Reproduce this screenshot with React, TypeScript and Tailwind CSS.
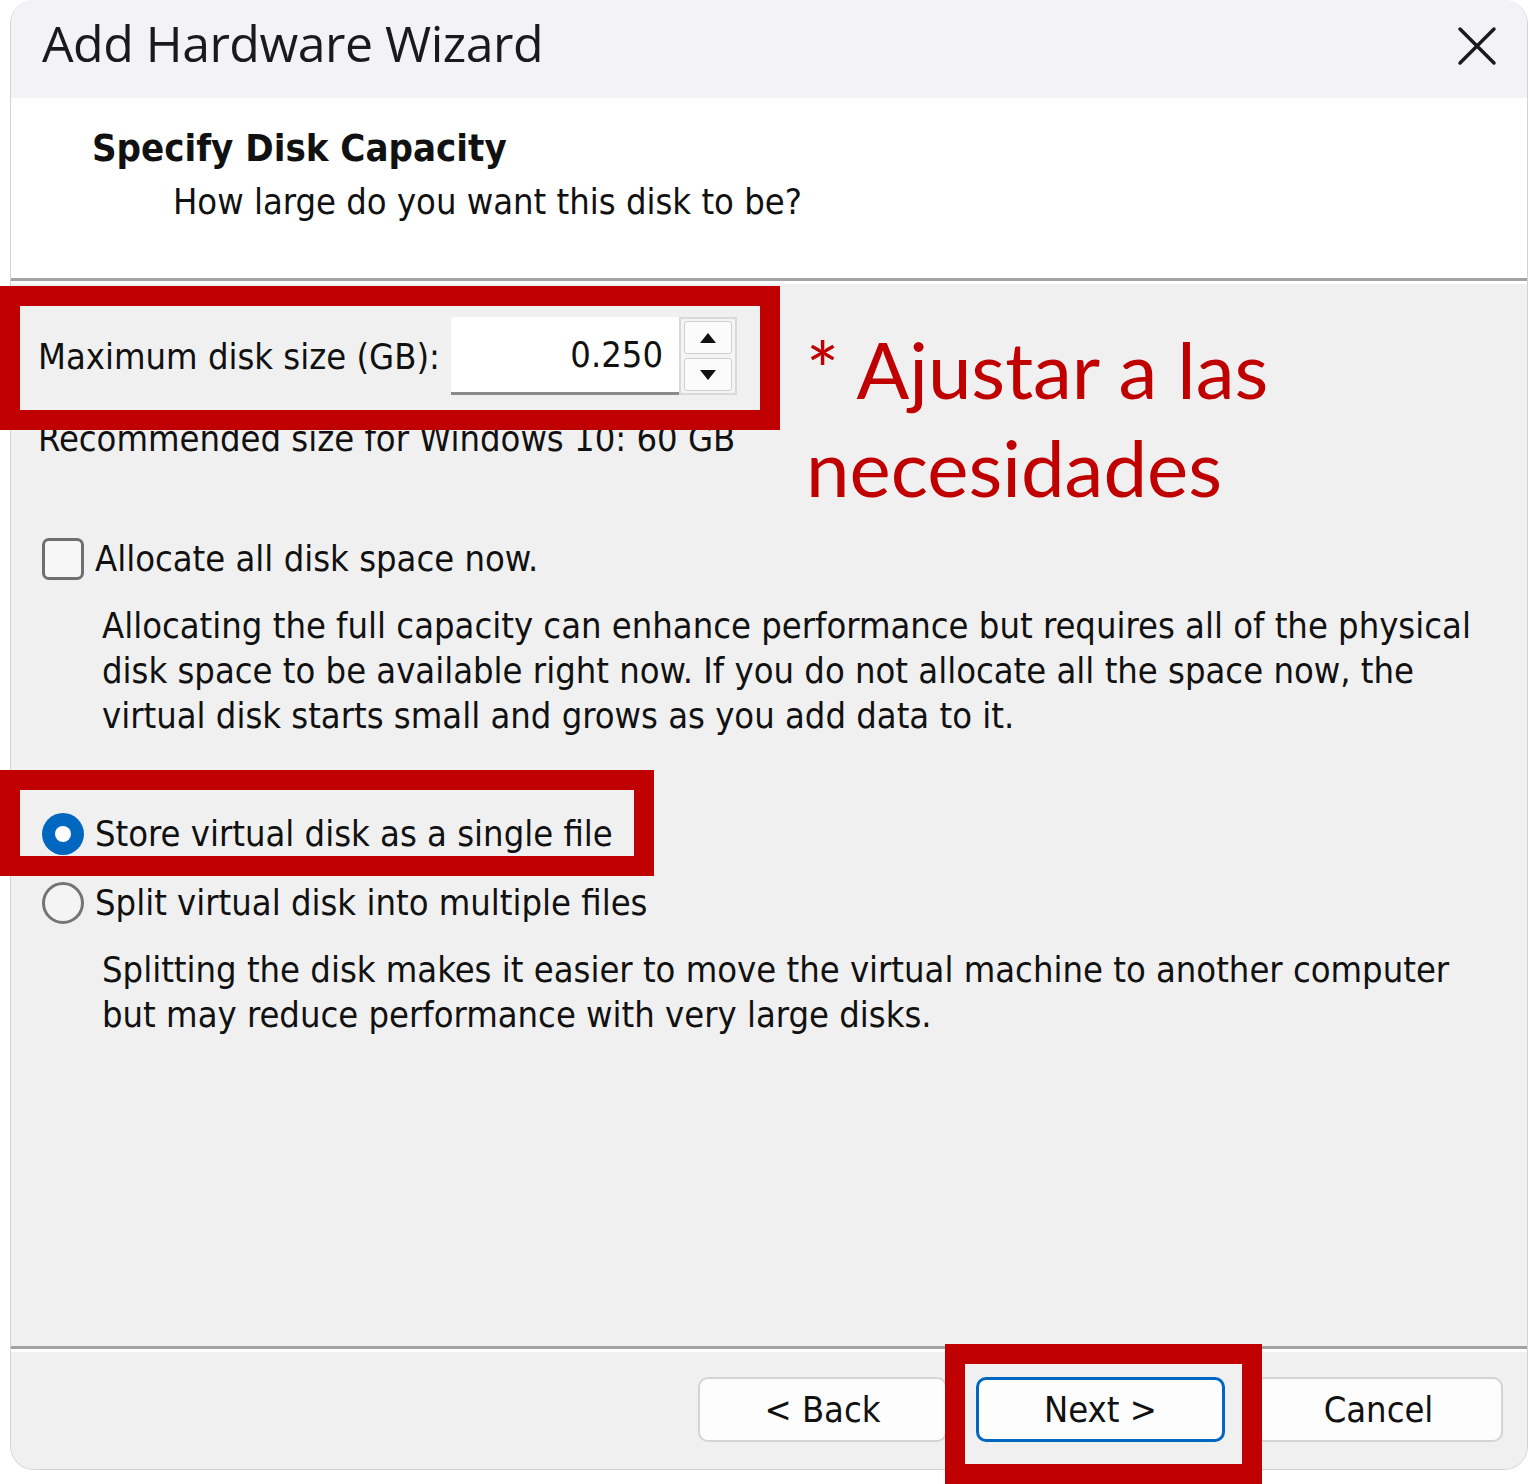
import React from "react";

const BODY = "font-['DejaVu_Sans_Condensed','DejaVu_Sans',sans-serif]";

function CloseIcon() {
  return (
    <svg width="40" height="40" viewBox="0 0 40 40" className="text-[#1b1b1b] mb-[6px]">
      <path d="M3 3 L37 37 M37 3 L3 37" stroke="currentColor" strokeWidth="3.5" strokeLinecap="round" />
    </svg>
  );
}

function Spinner() {
  return (
    <div className="flex flex-col gap-[4px] h-[78px] w-[58px] border-2 border-[#d9d9d9] bg-[#f4f4f4] px-[3px] py-[2px]">
      <button className="flex-1 flex items-center justify-center border border-[#cfcfcf] bg-[#fbfbfb] rounded-[3px]">
        <svg width="18" height="12" viewBox="0 0 18 12">
          <path d="M9 1 L17 11 L1 11 Z" fill="#111" />
        </svg>
      </button>
      <button className="flex-1 flex items-center justify-center border border-[#cfcfcf] bg-[#fbfbfb] rounded-[3px]">
        <svg width="18" height="12" viewBox="0 0 18 12">
          <path d="M1 1 L17 1 L9 11 Z" fill="#111" />
        </svg>
      </button>
    </div>
  );
}

function WizardButton({ label, primary = false }: { label: string; primary?: boolean }) {
  return (
    <button
      className={`w-[249px] h-[65px] rounded-[10px] bg-[#fdfdfd] text-[36px] leading-[45px] text-[#111] ${BODY} ${
        primary ? "border-[3px] border-[#0067c0]" : "border-2 border-[#d4d4d4]"
      }`}
    >
      {label}
    </button>
  );
}

export default function App() {
  return (
    <div className="relative w-[1530px] h-[1484px] bg-white pl-[10px] pr-[2px]">
      {/* Dialog */}
      <div className="flex flex-col h-[1470px] rounded-[24px] overflow-hidden border border-[#d2d2d2] border-t-0">
        {/* Title bar */}
        <div className="h-[98px] flex items-center justify-between bg-[#f3f2f7] pl-[31px] pr-[30px]">
          <span className="font-['Open_Sans',sans-serif] text-[50px] leading-[68px] text-[#1a1a1a] tracking-[-0.5px] mb-[12px]">
            Add Hardware Wizard
          </span>
          <CloseIcon />
        </div>

        {/* Header */}
        <div className={`h-[180px] bg-white pl-[81px] pt-[26px] ${BODY} text-[#111]`}>
          <div className="text-[38px] font-bold leading-[48px]">Specify Disk Capacity</div>
          <div className="pl-[81px] text-[36px] leading-[48px] mt-[6px]">How large do you want this disk to be?</div>
        </div>
        <div className="h-[3px] bg-[#a3a3a3]" />
        <div className="h-[3px] bg-white" />

        {/* Content */}
        <div className={`flex-1 bg-[#f0f0f0] pl-[27px] pt-[33px] ${BODY} text-[36px] leading-[45px] text-[#111]`}>
          <div className="flex items-center h-[78px]">
            <span className="w-[413px]">Maximum disk size (GB):</span>
            <div className="w-[228px] h-[78px] bg-white border-b-[3px] border-[#8a8a8a] flex items-center justify-end pr-[16px] rounded-tl-[4px]">
              0.250
            </div>
            <Spinner />
          </div>
          <div className="mt-[21px]">Recommended size for Windows 10: 60 GB</div>

          <div className="flex items-center gap-[11px] mt-[75px] pl-[4px]">
            <div className="w-[42px] h-[42px] rounded-[7px] border-[3px] border-[#6f6f6f] bg-[#f7f7f7]" />
            <span>Allocate all disk space now.</span>
          </div>
          <div className="pl-[64px] mt-[22px]">
            <div>Allocating the full capacity can enhance performance but requires all of the physical</div>
            <div>disk space to be available right now. If you do not allocate all the space now, the</div>
            <div>virtual disk starts small and grows as you add data to it.</div>
          </div>

          <div className="flex items-center gap-[11px] mt-[73px] pl-[4px]">
            <div className="w-[42px] h-[42px] rounded-full bg-[#0067c0] flex items-center justify-center">
              <div className="w-[16px] h-[16px] rounded-full bg-white" />
            </div>
            <span>Store virtual disk as a single file</span>
          </div>
          <div className="flex items-center gap-[11px] mt-[24px] pl-[4px]">
            <div className="w-[42px] h-[42px] rounded-full border-[3px] border-[#747474] bg-[#f4f4f4]" />
            <span>Split virtual disk into multiple files</span>
          </div>
          <div className="pl-[64px] mt-[22px]">
            <div>Splitting the disk makes it easier to move the virtual machine to another computer</div>
            <div>but may reduce performance with very large disks.</div>
          </div>
        </div>

        {/* Footer */}
        <div className="h-[3px] bg-[#a3a3a3]" />
        <div className="h-[3px] bg-white" />
        <div className="h-[117px] bg-[#f0f0f0] flex items-start justify-end gap-[29px] pt-[25px] pr-[24px]">
          <WizardButton label="< Back" />
          <WizardButton label="Next >" primary />
          <WizardButton label="Cancel" />
        </div>
      </div>

      {/* Annotations */}
      <div className="absolute left-0 top-[286px] w-[780px] h-[144px] border-[20px] border-[#c00000]" />
      <div className="absolute left-0 top-[770px] w-[654px] h-[106px] border-[20px] border-[#c00000]" />
      <div className="absolute left-[945px] top-[1344px] w-[317px] h-[140px] border-[20px] border-[#c00000]" />
      <div className="absolute left-[806px] top-[320px] font-['Lato',sans-serif] text-[78px] leading-[98px] text-[#c00000]">
        <div>* Ajustar a las</div>
        <div>necesidades</div>
      </div>
    </div>
  );
}
